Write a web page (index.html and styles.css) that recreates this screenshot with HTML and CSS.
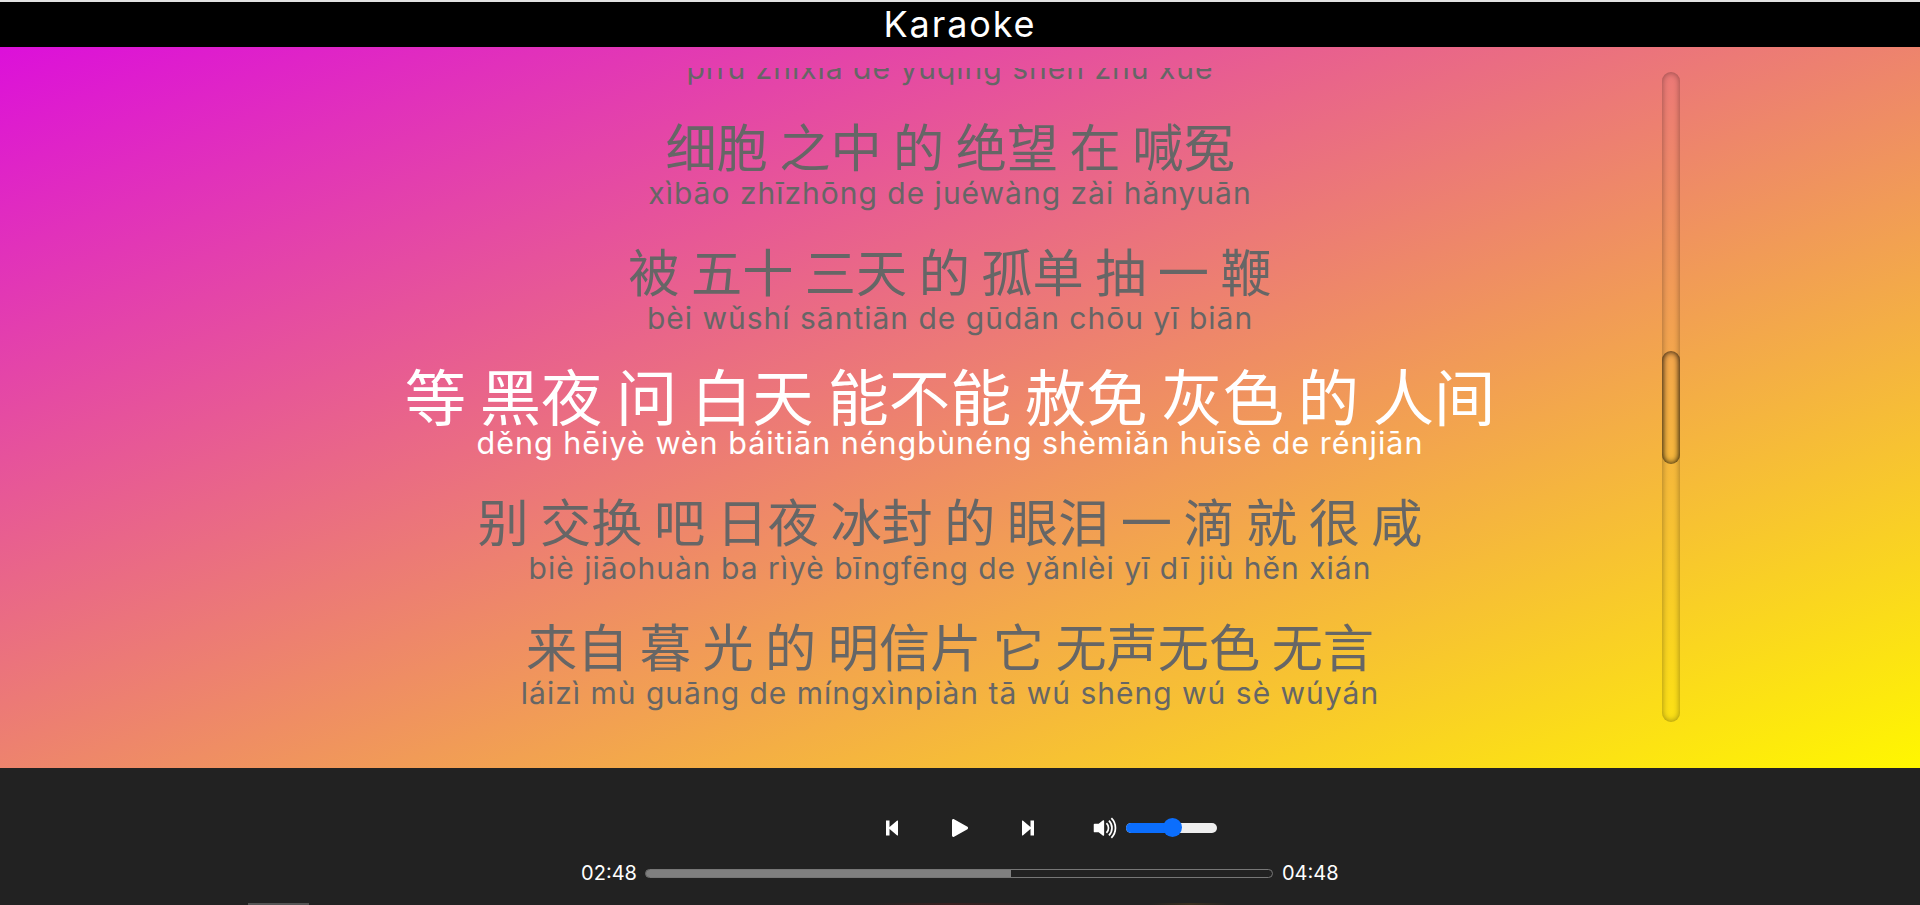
FILE: index.html
```html
<!DOCTYPE html>
<html lang="zh">
<head>
<meta charset="utf-8">
<title>Karaoke</title>
<link rel="stylesheet" href="styles.css">
</head>
<body>
<div class="page">
  <header class="title-bar">Karaoke</header>
  <main class="stage">
    <div class="lyrics">
      <div class="lyric-list">
        <p class="pinyin first">pīfū zhīxià de yùqíng shēn zhù xuě</p>
        <div class="line"><p class="hanzi">细胞 之中 的 绝望 在 喊冤</p><p class="pinyin">xìbāo zhīzhōng de juéwàng zài hǎnyuān</p></div>
        <div class="line"><p class="hanzi">被 五十 三天 的 孤单 抽 一 鞭</p><p class="pinyin">bèi wǔshí sāntiān de gūdān chōu yī biān</p></div>
        <div class="line active"><p class="hanzi">等 黑夜 问 白天 能不能 赦免 灰色 的 人间</p><p class="pinyin">děng hēiyè wèn báitiān néngbùnéng shèmiǎn huīsè de rénjiān</p></div>
        <div class="line"><p class="hanzi">别 交换 吧 日夜 冰封 的 眼泪 一 滴 就 很 咸</p><p class="pinyin">biè jiāohuàn ba rìyè bīngfēng de yǎnlèi yī dī jiù hěn xián</p></div>
        <div class="line"><p class="hanzi">来自 暮 光 的 明信片 它 无声无色 无言</p><p class="pinyin">láizì mù guāng de míngxìnpiàn tā wú shēng wú sè wúyán</p></div>
      </div>
    </div>
    <div class="scroll-track"><div class="scroll-thumb"></div></div>
  </main>
  <footer class="player">
    <div class="controls">
      <div class="buttons">
        <button class="btn" aria-label="Previous">
          <svg class="icon-skip" viewBox="0 0 12 16"><path d="M0 .5h3.500v15H0zM11.200.6a.6.6 0 0 1 .8.5v13.800a.6.6 0 0 1-.8.5L3 8.500v-1z"/></svg>
        </button>
        <button class="btn" aria-label="Play">
          <svg class="icon-play" viewBox="0 0 18 20"><path d="M0 1.600C0 .3 1.200-.4 2.300.3l14.900 8.400c1 .6 1 2 0 2.600L2.300 19.700C1.200 20.400 0 19.700 0 18.400z"/></svg>
        </button>
        <button class="btn" aria-label="Next">
          <svg class="icon-skip" viewBox="0 0 12 16"><path d="M12 .5H8.500v15H12zM.8.6A.6.6 0 0 0 0 1.100v13.800a.6.6 0 0 0 .8.5L9 8.500v-1z"/></svg>
        </button>
      </div>
      <div class="volume">
        <svg class="icon-volume" viewBox="0 0 15 16"><path d="M11.536 14.010A8.473 8.473 0 0 0 14.026 8a8.473 8.473 0 0 0-2.490-6.010l-.708.707A7.476 7.476 0 0 1 13.025 8c0 2.071-.84 3.946-2.197 5.303l.708.707z"/><path d="M10.121 12.596A6.480 6.480 0 0 0 12.025 8a6.480 6.480 0 0 0-1.904-4.596l-.707.707A5.483 5.483 0 0 1 11.025 8a5.483 5.483 0 0 1-1.610 3.890l.706.706z"/><path d="M8.707 11.182A4.486 4.486 0 0 0 10.025 8a4.486 4.486 0 0 0-1.318-3.182L8 5.525A3.489 3.489 0 0 1 9.025 8 3.490 3.490 0 0 1 8 10.475l.707.707z"/><path d="M6.717 3.550A.5.5 0 0 1 7 4v8a.5.5 0 0 1-.812.390L3.825 10.500H1.500A.5.5 0 0 1 1 10V6a.5.5 0 0 1 .5-.5h2.325l2.363-1.890a.5.5 0 0 1 .529-.06z"/></svg>
        <div class="slider"><div class="slider-fill" style="width:51%"></div><span class="slider-knob"></span></div>
      </div>
    </div>
    <div class="progress-row">
      <span class="time">02:48</span>
      <div class="progress"><div class="progress-fill" style="width:58.300%"></div></div>
      <span class="time">04:48</span>
    </div>
    <div class="peek"><span class="peek-tab"></span></div>
  </footer>
</div>
</body>
</html>
```

FILE: styles.css
```css
* { box-sizing: border-box; }
html, body { margin: 0; height: 100%; }
body { background: #222; font-family: "Inter", "Noto Sans CJK SC", sans-serif; overflow: hidden; }
.page { height: 905px; display: flex; flex-direction: column; }

.title-bar {
  height: 47px;
  border-top: 2px solid #e2e2e2;
  background: #000;
  color: #fff;
  font-size: 36px;
  letter-spacing: 1.900px;
  line-height: 45px;
  text-align: center;
  font-weight: 400;
}

.stage {
  position: relative;
  height: 721px;
  padding: 21px 240px 46px 220px;
  background: linear-gradient(to bottom right, #dc10da, #fff700);
}
.lyrics { height: 100%; overflow: hidden; text-align: center; color: #666; }
.lyric-list { margin-top: -17px; display: flex; flex-direction: column; gap: 35px; }
.line p, .pinyin, .hanzi { margin: 0; white-space: nowrap; }
.hanzi { font-family: "Noto Sans CJK SC", sans-serif; font-size: 51.200px; height: 56px; line-height: 50px; }
.pinyin { font-size: 30px; letter-spacing: 1px; line-height: 34px; }
.active { color: #fff; }
.active .hanzi { font-size: 61.300px; }
.active .pinyin { font-size: 30.500px; }

.scroll-track {
  position: absolute;
  left: 1662px;
  top: 25px;
  width: 18px;
  height: 650px;
  border-radius: 9px;
  box-shadow: inset 0 0 6px rgba(0, 0, 0, .4);
}
.scroll-thumb {
  margin-top: 279px;
  height: 113px;
  border-radius: 9px;
  box-shadow: inset 0 0 6px rgba(0, 0, 0, .9);
}

.player { flex: 1; display: flex; flex-direction: column; background: #222; color: #fff; padding-top: 40px; }
.controls { display: grid; grid-template-columns: 1fr auto 1fr; height: 40px; align-items: center; }
.buttons { grid-column: 2; display: flex; }
.btn { width: 68px; height: 40px; padding: 0; border: 0; background: none; display: flex; align-items: center; justify-content: center; }
.btn svg { fill: #fff; display: block; }
.icon-skip { width: 12px; height: 16px; }
.icon-play { width: 16.200px; height: 18px; }
.volume { display: flex; align-items: center; margin-left: 30px; gap: 8px; }
.icon-volume { width: 26px; height: 28px; fill: #fff; display: block; }
.slider { position: relative; width: 91px; height: 10px; border-radius: 5px; background: #eee; }
.slider-fill { height: 100%; border-radius: 5px; background: #0b6efd; }
.slider-knob { position: absolute; left: 37px; top: -5px; width: 19px; height: 19px; border-radius: 50%; background: #0b6efd; }

.progress-row { margin-top: 10px; height: 30px; padding-right: 1px; display: flex; align-items: center; justify-content: center; gap: 8px; }
.time { font-size: 20px; width: 56px; text-align: center; }
.progress { width: 628px; height: 9px; margin-right: 1px; border: 1px solid #777; border-radius: 5px; overflow: hidden; }
.progress-fill { height: 100%; background: #808080; }

.peek {
  margin-top: auto;
  height: 2px;
  padding-left: 248px;
  background: linear-gradient(to right, #222 870px, #3a2020 950px, #222 1040px, #222 1150px, #3a3020 1190px, #222 1230px);
}
.peek-tab { display: block; width: 61px; height: 2px; background: #555; }
```
